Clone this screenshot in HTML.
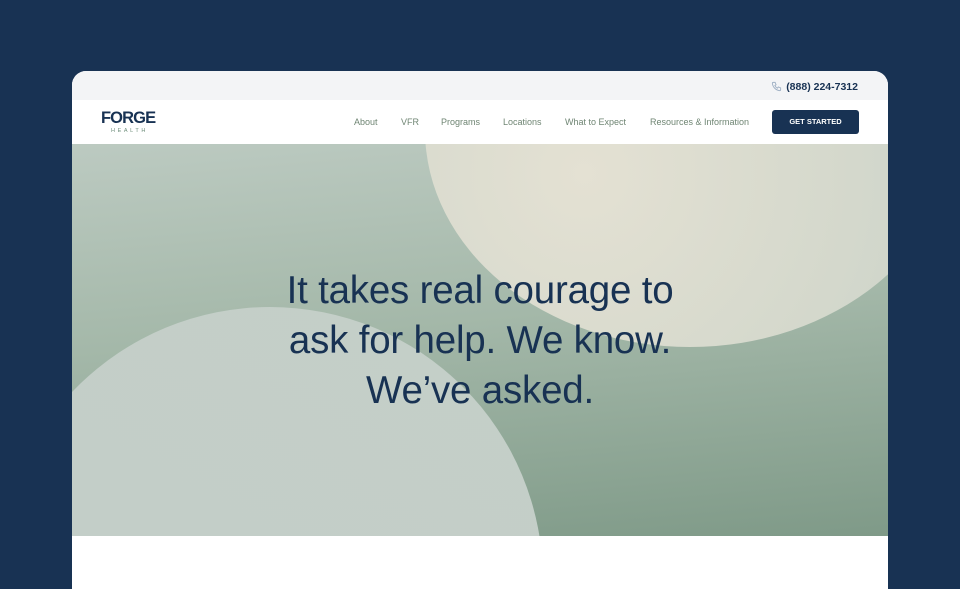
<!DOCTYPE html>
<html><head><style>
*{margin:0;padding:0;box-sizing:border-box}
html,body{width:960px;height:589px;overflow:hidden}
body{background:#183253;font-family:"Liberation Sans",sans-serif;position:relative}
.card{position:absolute;left:72px;top:71px;width:816px;height:518px;background:#fff;border-radius:14px 14px 0 0;overflow:hidden}
.top{height:29px;background:#f3f4f6;position:relative}
.phone{position:absolute;right:30px;top:10px;font-size:10.5px;font-weight:bold;color:#183253}
.nav{height:44px;position:relative;background:#fff}
.logo{position:absolute;left:29px;top:9px;color:#183253;font-weight:bold;font-size:16.5px;letter-spacing:-0.9px}
.logo small{display:block;font-size:5.5px;letter-spacing:2.6px;color:#6f8f7c;font-weight:normal;margin-left:10px;margin-top:0}
.links{position:absolute;top:17px;font-size:9px;color:#6f8573}
.links span{position:absolute;white-space:nowrap}
.btn{position:absolute;left:700px;top:10px;width:87px;height:24px;background:#183253;border-radius:3px;color:#fff;font-size:7.5px;font-weight:bold;text-align:center;line-height:24px}
.hero{position:absolute;top:73px;left:0;width:816px;height:392px;background:linear-gradient(175deg,#bccac1 0%,#a4b8a9 45%,#7f9a88 100%);overflow:hidden}
.c1{position:absolute;left:353px;top:-231px;width:530px;height:434px;border-radius:50%;background:radial-gradient(circle at 30% 60%,#e4e1d3,#d4d8cc 60%,#c6d1c8)}
.c2{position:absolute;left:-75px;top:163px;width:546px;height:546px;border-radius:50%;background:linear-gradient(30deg,#bac9d0 0%,#c3cec8 40%,#c4cfc8 100%)}
h1{position:absolute;left:0;width:816px;top:122px;text-align:center;font-weight:normal;font-size:38.5px;line-height:50px;color:#183253;letter-spacing:-0.2px}
</style></head><body>
<div class="card">
<div class="top"><div class="phone"><svg width="11" height="11" viewBox="0 0 12 12" style="vertical-align:-2px;margin-right:4px"><path d="M2.5 1.5l2 0 1 2.5-1.3 1a6 6 0 0 0 2.8 2.8l1-1.3 2.5 1v2c0 .6-.5 1-1 1A9 9 0 0 1 1.5 2.5c0-.5.4-1 1-1z" fill="none" stroke="#9fb0c4" stroke-width="1"/></svg>(888) 224-7312</div></div>
<div class="nav">
<div class="logo">FORGE<small>HEALTH</small></div>
<div class="links">
<span style="left:282px">About</span>
<span style="left:329px">VFR</span>
<span style="left:369px">Programs</span>
<span style="left:431px">Locations</span>
<span style="left:493px">What to Expect</span>
<span style="left:578px">Resources &amp; Information</span>
</div>
<div class="btn">GET STARTED</div>
</div>
<div class="hero">
<div class="c1"></div>
<div class="c2"></div>
<h1>It takes real courage to<br>ask for help. We know.<br>We’ve asked.</h1>
</div>
</div>
</body></html>
